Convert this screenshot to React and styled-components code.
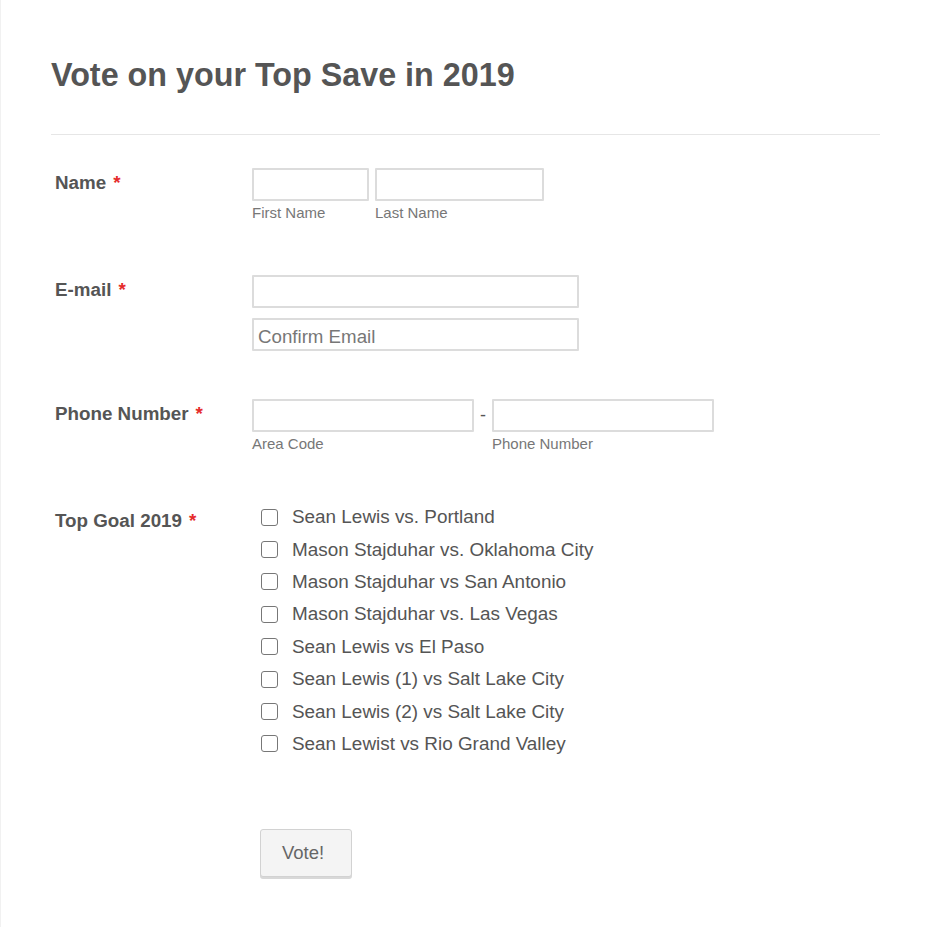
import React from "react";
import styled, { createGlobalStyle } from "styled-components";

const Global = createGlobalStyle`
  html, body { margin: 0; padding: 0; background: #fff; }
  body { font-family: "Liberation Sans", Arial, Helvetica, sans-serif; color: #555; }
`;

const Page = styled.div`
  min-height: 927px;
  box-sizing: border-box;
  border-left: 1px solid #f1f1f1;
  padding: 56px 50px 0 50px;
`;

const Title = styled.h1`
  margin: 0;
  font-size: 32.3px;
  font-weight: bold;
  line-height: 38px;
  color: #555;
`;

const Divider = styled.hr`
  border: 0;
  border-top: 1px solid #e6e6e6;
  margin: 40px 0 33px 0;
`;

const Row = styled.div`
  display: grid;
  grid-template-columns: 201px 1fr;
  margin-bottom: ${(p) => p.$gap}px;
`;

const Label = styled.div`
  padding: ${(p) => p.$top}px 0 0 4px;
  font-size: 18.8px;
  font-weight: bold;
  color: #555;
  line-height: 22px;
`;

const Star = styled.span`
  color: #e52b2b;
  margin-left: 7px;
`;

const Fields = styled.div`
  display: flex;
  flex-direction: column;
  gap: ${(p) => p.$gap || 0}px;
`;

const Line = styled.div`
  display: flex;
  align-items: flex-start;
  gap: ${(p) => p.$gap || 0}px;
`;

const Sub = styled.div`
  display: flex;
  flex-direction: column;
`;

const Input = styled.input`
  box-sizing: border-box;
  width: ${(p) => p.$w}px;
  height: 33px;
  border: 2px solid #dcdcdc;
  border-radius: 1px;
  padding: 4px 4px 0 4px;
  font-family: "Liberation Sans", Arial, sans-serif;
  font-size: 18.7px;
  color: #555;
  background: #fff;
  outline: none;
  &::placeholder { color: #777; }
`;

const SubLabel = styled.label`
  margin-top: 3px;
  font-size: 15px;
  line-height: 18px;
  color: #777;
`;

const Dash = styled.span`
  width: 18px;
  text-align: center;
  font-size: 18px;
  line-height: 33px;
  color: #555;
`;

const Options = styled.div`
  display: flex;
  flex-direction: column;
  padding: 0 0 0 9px;
`;

const Option = styled.label`
  display: flex;
  align-items: center;
  height: 32.4px;
  font-size: 18.9px;
  color: #555;
`;

const Box = styled.span`
  box-sizing: border-box;
  width: 17px;
  height: 17px;
  border: 1px solid #777;
  border-radius: 3px;
  margin-right: 14px;
  flex: none;
`;

const ButtonRow = styled.div`
  padding: 0 0 0 209px;
`;

const Button = styled.button`
  box-sizing: border-box;
  width: 92px;
  height: 48px;
  text-align: left;
  padding: 0 0 0 21px;
  background: #f4f4f4;
  border: 1px solid #d2d2d2;
  border-radius: 3px;
  box-shadow: 0 2px 0 #d8d8d8;
  font-family: "Liberation Sans", Arial, sans-serif;
  font-size: 18.5px;
  color: #666;
  cursor: pointer;
`;

const goals = [
  "Sean Lewis vs. Portland",
  "Mason Stajduhar vs. Oklahoma City",
  "Mason Stajduhar vs San Antonio",
  "Mason Stajduhar vs. Las Vegas",
  "Sean Lewis vs El Paso",
  "Sean Lewis (1) vs Salt Lake City",
  "Sean Lewis (2) vs Salt Lake City",
  "Sean Lewist vs Rio Grand Valley",
];

export default function App() {
  return (
    <>
      <Global />
      <Page>
        <Title>Vote on your Top Save in 2019</Title>
        <Divider />
        <Row $gap={53}>
          <Label $top={4}>Name<Star>*</Star></Label>
          <Line $gap={6}>
            <Sub>
              <Input $w={117} />
              <SubLabel>First Name</SubLabel>
            </Sub>
            <Sub>
              <Input $w={169} />
              <SubLabel>Last Name</SubLabel>
            </Sub>
          </Line>
        </Row>
        <Row $gap={48}>
          <Label $top={4}>E-mail<Star>*</Star></Label>
          <Fields $gap={10}>
            <Input $w={327} />
            <Input $w={327} placeholder="Confirm Email" />
          </Fields>
        </Row>
        <Row $gap={48}>
          <Label $top={4}>Phone Number<Star>*</Star></Label>
          <Line>
            <Sub>
              <Input $w={222} />
              <SubLabel>Area Code</SubLabel>
            </Sub>
            <Dash>-</Dash>
            <Sub>
              <Input $w={222} />
              <SubLabel>Phone Number</SubLabel>
            </Sub>
          </Line>
        </Row>
        <Row $gap={69}>
          <Label $top={9}>Top Goal 2019<Star>*</Star></Label>
          <Options>
            {goals.map((g) => (
              <Option key={g}>
                <Box />
                {g}
              </Option>
            ))}
          </Options>
        </Row>
        <ButtonRow>
          <Button>Vote!</Button>
        </ButtonRow>
      </Page>
    </>
  );
}
